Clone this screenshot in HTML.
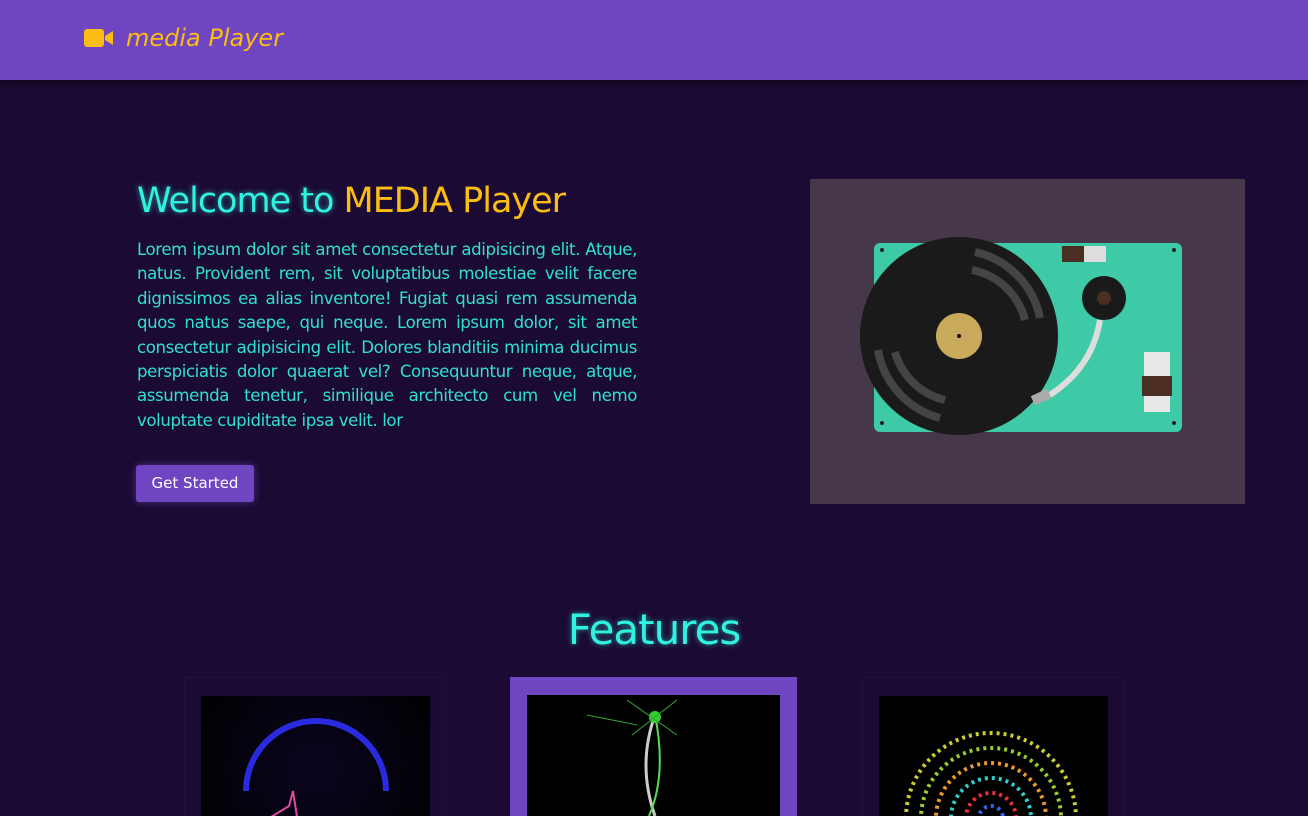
<!DOCTYPE html>
<html><head><meta charset="utf-8"><style>
*{margin:0;padding:0;box-sizing:border-box}
html,body{width:1308px;height:816px;overflow:hidden}
body{background:#1b0a33;font-family:"DejaVu Sans","Liberation Sans",sans-serif;position:relative}
.hdr{position:absolute;left:0;top:0;width:1308px;height:80px;background:#6f45c2;box-shadow:0 4px 10px rgba(0,0,0,.4)}
.logo{position:absolute;left:84px;top:24px;color:#fbbd12;font-size:24px;display:flex;align-items:center;gap:12px;font-style:italic}
h1{position:absolute;left:137px;top:181px;font-size:35px;font-weight:normal;color:#2ff2e0;text-shadow:0 0 6px rgba(47,242,224,.6);letter-spacing:-1px;white-space:nowrap}
h1 span{color:#fbbd12;text-shadow:none}
p{position:absolute;left:137px;top:238px;width:500px;font-size:16.6px;line-height:24.4px;color:#2fe0d0;text-align:justify;letter-spacing:-.4px}
.btn{position:absolute;left:136px;top:465px;width:118px;height:37px;background:#6f45c2;color:#fff;font-size:15px;line-height:37px;text-align:center;border-radius:3px;box-shadow:0 0 8px rgba(111,69,194,.6)}
.imgbox{position:absolute;left:810px;top:179px;width:435px;height:325px;background:#47374a}
h2{position:absolute;left:0;width:1308px;top:605px;text-align:center;font-size:42px;font-weight:normal;color:#2ff2e0;text-shadow:0 0 6px rgba(47,242,224,.6);letter-spacing:-1px}
.card{position:absolute;top:677px;height:139px;overflow:hidden}
.c1{left:184px;width:262px;border:1px solid #22103c;border-bottom:0}
.c2{left:510px;width:287px;background:#6f45c2}
.c3{left:862px;width:262px;border:1px solid #22103c;border-bottom:0}
.im{position:absolute;top:18px;height:121px;background:#000;overflow:hidden}
</style></head><body>
<div class="hdr"><div class="logo"><svg width="30" height="20" viewBox="0 0 30 20"><rect x="0" y="1" width="20" height="18" rx="3" fill="#fbbd12"/><path d="M21 8 L29 3 V17 L21 12Z" fill="#fbbd12"/></svg>media Player</div></div>
<h1>Welcome to <span>MEDIA Player</span></h1>
<p>Lorem ipsum dolor sit amet consectetur adipisicing elit. Atque, natus. Provident rem, sit voluptatibus molestiae velit facere dignissimos ea alias inventore! Fugiat quasi rem assumenda quos natus saepe, qui neque. Lorem ipsum dolor, sit amet consectetur adipisicing elit. Dolores blanditiis minima ducimus perspiciatis dolor quaerat vel? Consequuntur neque, atque, assumenda tenetur, similique architecto cum vel nemo voluptate cupiditate ipsa velit. lor</p>
<div class="btn">Get Started</div>
<div class="imgbox"><svg width="435" height="325" viewBox="810 179 435 325">
<rect x="874" y="243" width="308" height="189" rx="6" fill="#3ec9a7"/>
<circle cx="882" cy="250" r="2" fill="#222"/><circle cx="1174" cy="250" r="2" fill="#222"/><circle cx="882" cy="423" r="2" fill="#222"/><circle cx="1174" cy="423" r="2" fill="#222"/>
<rect x="1062" y="246" width="44" height="16" fill="#ddd"/><rect x="1062" y="246" width="22" height="16" fill="#4a2e22"/>
<circle cx="959" cy="336" r="99" fill="#1a1a1a"/>
<path d="M975 252 A85 85 0 0 1 1040 318" stroke="#444" stroke-width="8" fill="none"/>
<path d="M972 270 A68 68 0 0 1 1025 320" stroke="#444" stroke-width="8" fill="none"/>
<path d="M940 418 A85 85 0 0 1 878 350" stroke="#444" stroke-width="8" fill="none"/>
<path d="M945 400 A68 68 0 0 1 895 352" stroke="#444" stroke-width="8" fill="none"/>
<circle cx="959" cy="336" r="23" fill="#c9a95c"/><circle cx="959" cy="336" r="2" fill="#111"/>
<circle cx="1104" cy="298" r="22" fill="#1a1a1a"/><circle cx="1104" cy="298" r="7" fill="#4a2e22"/>
<path d="M1100 320 Q1092 370 1045 398" stroke="#ddd" stroke-width="6" fill="none"/>
<rect x="1032" y="392" width="18" height="10" fill="#aaa" transform="rotate(-25 1041 397)"/>
<rect x="1144" y="352" width="26" height="60" fill="#e8e8e8"/><rect x="1142" y="376" width="30" height="20" fill="#4a2e22"/>
</svg></div>
<h2>Features</h2>
<div class="card c1"><div class="im" style="left:16px;width:229px;background:radial-gradient(circle at 50% 60%,#0a0520,#000)"><svg width="229" height="121"><path d="M45 95 A70 70 0 0 1 185 95" stroke="#2a2ae0" stroke-width="6" fill="none"/><path d="M70 121 L88 110 L92 95 L96 121" stroke="#e04aa0" stroke-width="2" fill="none"/></svg></div></div>
<div class="card c2"><div class="im" style="left:17px;width:253px"><svg width="253" height="121"><path d="M128 20 Q110 70 128 121" stroke="#ccc" stroke-width="3" fill="none"/><path d="M128 20 Q140 80 122 121" stroke="#5d5" stroke-width="2" fill="none"/><circle cx="128" cy="22" r="6" fill="#3c3"/><path d="M100 5 L150 40 M150 5 L105 40 M60 20 L110 30" stroke="#3a3" stroke-width="1"/></svg></div></div>
<div class="card c3"><div class="im" style="left:16px;width:229px;background:#000"><svg width="229" height="121"><g fill="none" stroke-dasharray="3 4" stroke-width="4"><circle cx="112" cy="122" r="85" stroke="#cc3"/><circle cx="112" cy="122" r="70" stroke="#9c3"/><circle cx="112" cy="122" r="55" stroke="#e93"/><circle cx="112" cy="122" r="40" stroke="#3cc"/><circle cx="112" cy="122" r="25" stroke="#e33"/><circle cx="112" cy="122" r="12" stroke="#36e"/></g></svg></div></div>
</body></html>
